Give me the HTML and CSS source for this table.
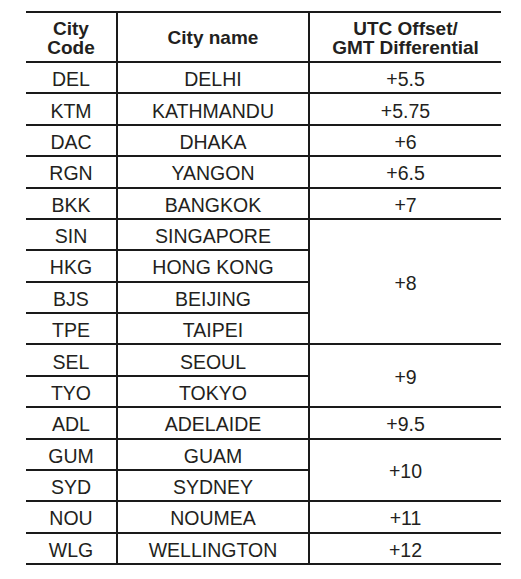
FILE: index.html
```html
<!DOCTYPE html>
<html lang="en">
<head>
<meta charset="utf-8">
<title>City codes</title>
<link rel="stylesheet" href="styles.css">
</head>
<body>
<table class="tz">
  <colgroup>
    <col class="c-code">
    <col class="c-name">
    <col class="c-off">
  </colgroup>
  <thead>
    <tr class="head">
      <th>City<br>Code</th>
      <th>City name</th>
      <th>UTC Offset/<br>GMT Differential</th>
    </tr>
  </thead>
  <tbody>
    <tr><td>DEL</td><td>DELHI</td><td>+5.5</td></tr>
    <tr><td>KTM</td><td>KATHMANDU</td><td>+5.75</td></tr>
    <tr><td>DAC</td><td>DHAKA</td><td>+6</td></tr>
    <tr><td>RGN</td><td>YANGON</td><td>+6.5</td></tr>
    <tr><td>BKK</td><td>BANGKOK</td><td>+7</td></tr>
    <tr><td>SIN</td><td>SINGAPORE</td><td rowspan="4">+8</td></tr>
    <tr><td>HKG</td><td>HONG KONG</td></tr>
    <tr><td>BJS</td><td>BEIJING</td></tr>
    <tr><td>TPE</td><td>TAIPEI</td></tr>
    <tr><td>SEL</td><td>SEOUL</td><td rowspan="2">+9</td></tr>
    <tr><td>TYO</td><td>TOKYO</td></tr>
    <tr><td>ADL</td><td>ADELAIDE</td><td>+9.5</td></tr>
    <tr><td>GUM</td><td>GUAM</td><td rowspan="2">+10</td></tr>
    <tr><td>SYD</td><td>SYDNEY</td></tr>
    <tr><td>NOU</td><td>NOUMEA</td><td>+11</td></tr>
    <tr><td>WLG</td><td>WELLINGTON</td><td>+12</td></tr>
  </tbody>
</table>
</body>
</html>
```

FILE: styles.css
```css
html, body {
  margin: 0;
  padding: 0;
  background: #ffffff;
}

body {
  padding: 11px 0 0 26px;
  font-family: "Liberation Sans", Arial, Helvetica, sans-serif;
  color: #231f20;
}

.tz {
  border-collapse: collapse;
  table-layout: fixed;
  width: 475px;
}

.c-code { width: 91px; }
.c-name { width: 192px; }
.c-off  { width: 192px; }

.tz th,
.tz td {
  border-top: 2px solid #1a1a1a;
  border-bottom: 2px solid #1a1a1a;
  border-left: 2px solid #1a1a1a;
  border-right: 2px solid #1a1a1a;
  text-align: center;
  vertical-align: middle;
  padding: 0;
}

.tz tr > :first-child { border-left: none; }
.tz tr > :last-child  { border-right: none; }

.tz th {
  height: 46px;
  font-size: 19px;
  font-weight: bold;
  line-height: 19.5px;
  padding-top: 2px;
}

.tz td {
  height: 26.375px;
  font-size: 19.5px;
  font-weight: normal;
  line-height: 20px;
  padding-top: 3px;
}
```
